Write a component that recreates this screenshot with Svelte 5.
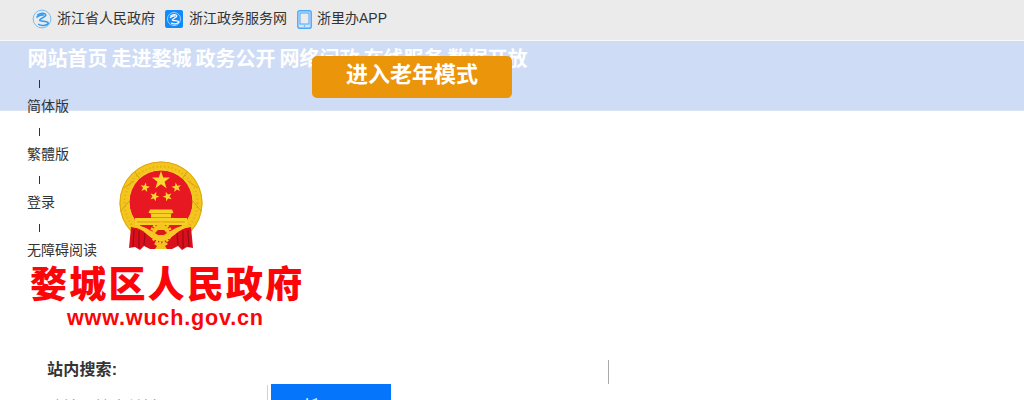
<script lang="ts">
	const navItems = ['网站首页', '走进婺城', '政务公开', '网络问政', '在线服务', '数据开放'];
	const tools = ['简体版', '繁體版', '登录', '无障碍阅读'];

	// five-pointed star centred on cx, cy
	function star(cx: number, cy: number, r: number, turn = 0) {
		const points: string[] = [];
		for (let i = 0; i < 10; i++) {
			const radius = i % 2 ? r * 0.4 : r;
			const angle = ((i * 36 - 90 + turn) * Math.PI) / 180;
			points.push(`${cx + radius * Math.cos(angle)},${cy + radius * Math.sin(angle)}`);
		}
		return points.join(' ');
	}

	const stars = [
		star(42, 19.5, 9.5),
		star(26, 26.5, 5, 10),
		star(57.5, 26.5, 5, -10),
		star(35.5, 35.5, 5, 20),
		star(48.5, 35.5, 5, -20)
	];
</script>

{#snippet swirl()}
	<path d="M5.2 6.3C8 3.7 12.8 3.5 13.7 5.7C14.5 7.7 8.8 8.9 7.8 11C7 12.8 15.5 11.5 16.2 13.8C16.5 15.6 10.5 18 6.2 15.2" />
	<path d="M4.5 8.5C6.8 6.2 10.4 5.2 11.8 6.3" />
{/snippet}

<div class="page">
	<header class="topbar">
		<a href="#top" class="link province">
			<svg width="20" height="20" viewBox="0 0 20 20" fill="none" stroke="#2e9bf5" stroke-width="1.6">
				<circle cx="10" cy="10" r="8.9" stroke="#79bdf2" stroke-width="1" />
				{@render swirl()}
			</svg>
			浙江省人民政府
		</a>
		<a href="#top" class="link service">
			<svg width="18" height="18" viewBox="0 0 18 18" fill="none">
				<rect width="18" height="18" rx="2" fill="#118bfa" />
				<g transform="translate(1.5 1.5) scale(.75)" stroke="#fff" stroke-width="1.7">
					<circle cx="10" cy="10" r="8.7" stroke="#a9d6ff" stroke-width="1.2" />
					{@render swirl()}
				</g>
			</svg>
			浙江政务服务网
		</a>
		<a href="#top" class="link app">
			<svg width="15" height="19" viewBox="0 0 15 19" fill="none" stroke="#4aa6f7">
				<rect x=".8" y=".8" width="13.4" height="17.4" rx="1.8" fill="#cfe7fc" stroke-width="1.4" />
				<rect x="3" y="3" width="9" height="11" fill="#ebebeb" stroke-width="1" />
				<circle cx="7.5" cy="16" r=".8" fill="#4aa6f7" stroke="none" />
			</svg>
			浙里办APP
		</a>
	</header>

	<nav class="band">
		{#each navItems as item}
			<a href="#top">{item}</a>
		{/each}
	</nav>

	<a href="#top" class="elder">进入老年模式</a>

	<main>
		<ul class="tools">
			{#each tools as tool}
				<li><i></i><a href="#top">{tool}</a></li>
			{/each}
		</ul>

		<div class="brand">
			<svg class="emblem" width="84" height="90" viewBox="0 0 84 90">
				<circle cx="42" cy="42" r="41.6" fill="#f4c51d" />
				<circle cx="42" cy="42" r="41" fill="none" stroke="#d8a313" stroke-width=".9" />
				<circle cx="42" cy="42" r="36.5" fill="none" stroke="#e0ae1b" stroke-width="2" stroke-dasharray="1.2 2.6" />
				<circle cx="42" cy="41" r="32" fill="#e81822" stroke="#f9d52f" />
				<path d="M5 27L15 20M16 11L21 18M79 27L69 20M68 11L63 18M2 50L11 39M82 50L73 39" stroke="#d6a019" fill="none" />
				<path d="M12 66C20 67 28 69 34 74L31 88L25 85L21 89L16 86L10 87Z" fill="#d9101b" />
				<path d="M72 66C64 67 56 69 50 74L53 88L59 85L63 89L68 86L74 87Z" fill="#d9101b" />
				<path d="M15 69L14 86M20 70L20 87M26 72L25 84M69 69L70 86M64 70L64 87M58 72L59 84" stroke="#980b14" stroke-width="1.2" />
				<path d="M29 80L34 74H50L55 80L53 88H31Z" fill="#d9101b" />
				<path d="M31 48.5H53L54.5 52H52V57H68V64H16V57H32V52H29.5Z" fill="#f8cf24" />
				<path d="M31 52.5H53M32 56.5H52M18 61H66" stroke="#d6910e" stroke-width=".9" />
				<path d="M13 66C27 62 31 73 42 73S57 62 71 66C58 68 54 78 42 78S27 68 13 66Z" fill="#f6c927" />
				<circle cx="42" cy="72" r="9.5" fill="none" stroke="#f7c822" stroke-width="3" stroke-dasharray="2.4 1.2" />
				<circle cx="42" cy="72" r="8.5" fill="#f4c51d" />
				<path d="M36 72L39 69H45L48 72L45 74H39Z" fill="#d81a18" />
				<path d="M25 71C32 72 36 76 42 76S52 72 59 71C54 75 49 80 42 80S30 75 25 71Z" fill="#f6c927" />
				<path d="M35 83C38 80 40 81 42 83C44 81 46 80 49 83L46 85L48 88H36L38 85Z" fill="#f3c322" />
				{#each stars as points}
					<polygon {points} fill="#fbd72f" />
				{/each}
			</svg>
			<div class="name">婺城区人民政府</div>
			<div class="domain">www.wuch.gov.cn</div>
		</div>

		<div class="search">
			<div class="label">站内搜索:</div>
			<div class="row">
				<input type="text" placeholder="请输入搜索关键词" />
				<button>搜<span>索</span></button>
			</div>
		</div>
		<div class="divider"></div>
	</main>
</div>

<style>
	:global(body) {
		margin: 0;
	}

	.page {
		position: relative;
		height: 400px;
		overflow: hidden;
		background: #fff;
		color: #333;
		font: 14px/24px 'Liberation Sans', 'Noto Sans CJK SC', sans-serif;
	}

	a {
		color: inherit;
		text-decoration: none;
	}

	.topbar {
		display: flex;
		box-sizing: border-box;
		height: 41px;
		padding-left: 32px;
		background: #ebebeb;
		border-bottom: 1px solid #f8f8f8;
	}

	.link {
		display: flex;
		align-items: center;
		height: 36px;
		gap: 5px;
		white-space: nowrap;
	}

	.link svg {
		margin-top: 2px;
	}

	.service {
		margin-left: 10px;
		gap: 6px;
	}

	.app {
		margin-left: 10px;
	}

	.band {
		display: flex;
		box-sizing: border-box;
		gap: 4px;
		height: 70px;
		padding: 3px 0 0 27.4px;
		background: #cfdcf5;
		border-bottom: 1px solid #dbe4f5;
		color: #fff;
		font-size: 20px;
		font-weight: bold;
		line-height: 30px;
	}

	/* floats over the navigation */
	.elder {
		position: absolute;
		left: 312px;
		top: 56px;
		width: 200px;
		height: 42px;
		border-radius: 5px;
		background: #eb950b;
		color: #fff;
		font-size: 22px;
		font-weight: bold;
		line-height: 38px;
		text-align: center;
	}

	main {
		position: relative;
		display: grid;
		grid-template-columns: 608px 1px;
		margin-top: -39px;
	}

	.tools {
		grid-area: 1 / 1;
		margin: 0;
		padding: 0 0 0 27px;
		list-style: none;
	}

	.tools li {
		height: 48px;
	}

	.tools i {
		display: block;
		width: 1px;
		height: 8px;
		margin: 0 0 6px 12px;
		background: #333;
		transform: translateY(8px);
	}

	.tools a {
		display: block;
		padding-top: 8px;
	}

	.brand {
		grid-area: 1 / 1;
		justify-self: start;
		width: 274px;
		padding: 89px 0 0 30px;
		color: #fb0509;
		font-weight: bold;
		white-space: nowrap;
	}

	.emblem {
		display: block;
		margin-left: 89px;
	}

	.name {
		margin-top: 10px;
		font-size: 37px;
		font-weight: 900;
		line-height: 50px;
		letter-spacing: 2.2px;
	}

	.domain {
		margin-top: -5px;
		padding-left: 37px;
		font-size: 21.6px;
		letter-spacing: 0.8px;
		line-height: 24px;
	}

	.search {
		grid-area: 2 / 1;
		padding: 28px 0 0 47px;
	}

	.label {
		font-size: 16px;
		font-weight: bold;
		letter-spacing: 0.2px;
	}

	.row {
		display: flex;
		align-items: flex-start;
		gap: 3px;
		margin-top: 2px;
	}

	input {
		box-sizing: border-box;
		width: 221px;
		height: 41px;
		margin-top: 1px;
		padding: 0;
		border: 0;
		border-right: 1px solid #ccd3e0;
		outline: 0;
		font: 16px 'Noto Sans CJK SC', sans-serif;
	}

	input::placeholder {
		color: #888;
	}

	button {
		width: 120px;
		height: 48px;
		padding: 0;
		border: 0;
		background: #0576fb;
		color: #fff;
		font: 20px 'Noto Sans CJK SC', sans-serif;
	}

	button span {
		margin-left: 16px;
		vertical-align: -2px;
	}

	.divider {
		grid-area: 2 / 2;
		height: 24px;
		margin-top: 30px;
		background: #aaa;
	}
</style>
